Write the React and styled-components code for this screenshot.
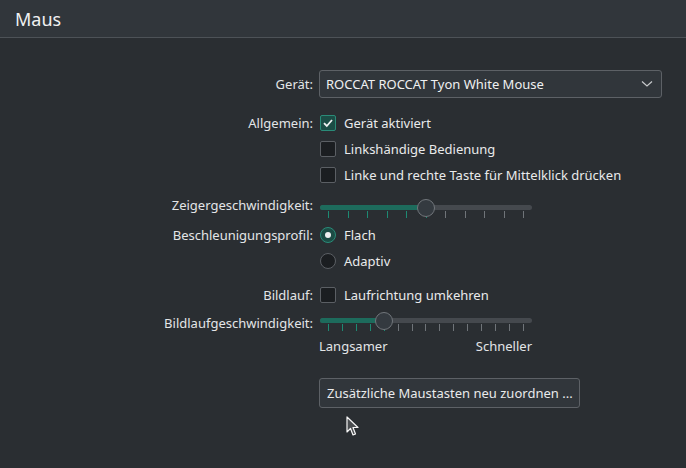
import styled, { createGlobalStyle } from 'styled-components';

const GlobalStyle = createGlobalStyle`
  html, body { margin: 0; padding: 0; background: #2a2e32; }
  body {
    font-family: "Noto Sans", "Open Sans", sans-serif;
    font-size: 13px;
    color: #eff0f1;
    width: 686px; height: 468px; overflow: hidden;
  }
`

const Page = styled.div`
    position: relative;
    width: 686px; height: 468px;
    background: #2a2e32;
`
const Header = styled.header`
    display: flex; align-items: center;
    height: 37px;
    padding-left: 15px;
    background: #31363b;
    border-bottom: 1px solid #4d5257;
    font-size: 18px;
    color: #eff0f1;
`
const Form = styled.div`
    display: grid;
    grid-template-columns: 313px 348px;
    column-gap: 6px;
    align-items: center;
    padding-top: 32px;
`
const Label = styled.div`
    justify-self: end;
    white-space: nowrap;
    color: #e3e5e7;
`
const Cell = styled.div`
    display: flex; align-items: center;
    height: ${p => p.$h || 26}px;
    margin-top: ${p => p.$mt || 0}px;
`
const Combo = styled.div`
    display: flex; align-items: center; justify-content: space-between;
    box-sizing: border-box;
    width: 343px; height: 28px;
    padding: 0 8px 0 6px;
    background: #31363b;
    border: 1px solid #5d6166;
    border-radius: 3px;
    color: #eff0f1;
`
const Box = styled.span`
    display: inline-flex; align-items: center; justify-content: center;
    box-sizing: border-box;
    width: 16px; height: 16px;
    margin-left: 1px;
    border-radius: ${p => p.$round ? '50%' : '2px'};
    background: ${p => p.$on ? '#1c4c45' : '#1b1e21'};
    border: 1px solid ${p => p.$on ? '#2a8b78' : '#5b5f64'};
`
const Dot = styled.span`
    width: 6px; height: 6px; border-radius: 50%;
    background: #eff0f1;
`
const OptText = styled.span`
    margin-left: 8px;
    white-space: nowrap;
    color: #e9eaeb;
`
const SliderWrap = styled.div`
    position: relative;
    width: 212px; height: ${p => p.$h}px;
    margin-left: 1px;
`
const Track = styled.div`
    position: absolute; left: 0; right: 0; top: ${p => p.$top}px;
    height: 5px; border-radius: 3px;
    background: #45494e;
    overflow: hidden;
`
const Fill = styled.div`
    height: 100%;
    background: #1d6b5c;
`
const Handle = styled.div`
    position: absolute; top: ${p => p.$top}px;
    box-sizing: border-box;
    width: 18px; height: 18px; margin-left: -9px;
    border-radius: 50%;
    background: #343a40;
    border: 1px solid #71767b;
`
const Ticks = styled.div`
    position: absolute; left: 8px; right: 8px; top: ${p => p.$top}px;
    display: flex; justify-content: space-between;
`
const Tick = styled.span`
    width: 1px; height: 7px;
    background: ${p => p.$on ? '#1d8a73' : '#6f7479'};
`
const Scale = styled.div`
    display: flex; justify-content: space-between;
    width: 213px;
    color: #e3e5e7;
`
const Button = styled.div`
    display: flex; align-items: center;
    box-sizing: border-box;
    height: 30px;
    padding: 0 6px 0 7px;
    background: #31363b;
    border: 1px solid #5d6166;
    border-radius: 3px;
    white-space: nowrap;
    color: #e9eaeb;
`
const Cursor = styled.svg`
    position: absolute; left: 346px; top: 416px;
`

const Check = ({ on, round, children }) => (
    <Cell>
        <Box $on={on} $round={round}>
            {on && !round && (
                <svg width="12" height="12" viewBox="0 0 12 12">
                    <path d="M2 6.2 L4.8 9 L10 3" fill="none" stroke="#eff0f1" strokeWidth="1.8" />
                </svg>
            )}
            {on && round && <Dot />}
        </Box>
        <OptText>{children}</OptText>
    </Cell>
)

const Slider = ({ value, max, top, h }) => {
    const pos = 8 + (196 * value) / max
    return (
        <SliderWrap $h={h}>
            <Track $top={top}><Fill style={{ width: pos }} /></Track>
            <Ticks $top={top + 6}>
                {Array.from({ length: max + 1 }, (_, i) => <Tick key={i} $on={i <= value} />)}
            </Ticks>
            <Handle $top={top - 6} style={{ left: pos }} />
        </SliderWrap>
    )
}

export default function App() {
    return (
        <Page>
            <GlobalStyle />
            <Header>Maus</Header>
            <Form>
                <Label>Gerät:</Label>
                <Cell $h={28}>
                    <Combo>
                        <span>ROCCAT ROCCAT Tyon White Mouse</span>
                        <svg width="12" height="8" viewBox="0 0 12 8">
                            <path d="M1 1.5 L6 6 L11 1.5" fill="none" stroke="#c8cacc" strokeWidth="1.2" />
                        </svg>
                    </Combo>
                </Cell>

                <Label style={{ marginTop: 12 }}>Allgemein:</Label>
                <div style={{ marginTop: 12 }}><Check on>Gerät aktiviert</Check></div>
                <span />
                <Check>Linkshändige Bedienung</Check>
                <span />
                <Check>Linke und rechte Taste für Mittelklick drücken</Check>

                <Label>Zeigergeschwindigkeit:</Label>
                <Slider value={5} max={10} top={17} h={34} />

                <Label>Beschleunigungsprofil:</Label>
                <Check on round>Flach</Check>
                <span />
                <Check round>Adaptiv</Check>

                <Label style={{ marginTop: 8 }}>Bildlauf:</Label>
                <div style={{ marginTop: 8 }}><Check>Laufrichtung umkehren</Check></div>

                <Label>Bildlaufgeschwindigkeit:</Label>
                <Slider value={4} max={14} top={10} h={30} />
                <span />
                <Cell $h={16}>
                    <Scale><span>Langsamer</span><span>Schneller</span></Scale>
                </Cell>

                <span />
                <Cell $h={30} $mt={24}>
                    <Button>Zusätzliche Maustasten neu zuordnen ...</Button>
                </Cell>
            </Form>
            <Cursor width="14" height="22" viewBox="0 0 14 22">
                <path d="M1 1 L1 16 L4.5 12.5 L7 19 L9.5 18 L7 11.5 L12 11.5 Z" fill="#4a4d50" stroke="#f5f5f5" strokeWidth="1.2" strokeLinejoin="round" />
            </Cursor>
        </Page>
    )
}
